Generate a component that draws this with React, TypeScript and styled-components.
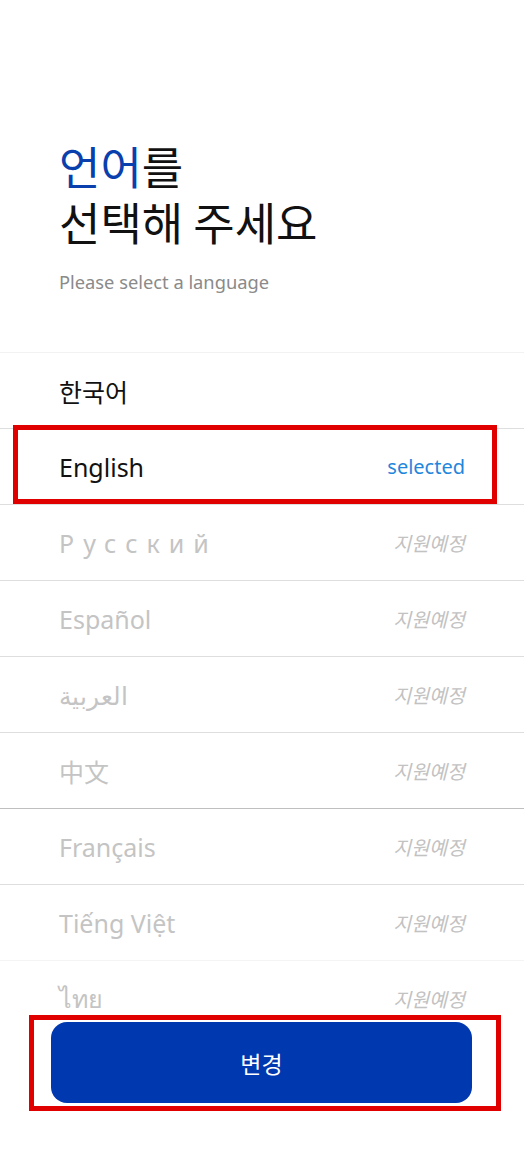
import React from "react";
import styled, { createGlobalStyle } from "styled-components";

const GlobalStyle = createGlobalStyle`
  html, body {
    margin: 0;
    padding: 0;
    background: #ffffff;
  }
  body {
    font-family: "Noto Sans", "Noto Sans CJK KR", sans-serif;
  }
  * {
    box-sizing: border-box;
  }
`;

type Divider = "faint" | "normal" | "strong" | "none";

const dividerColors: Record<Divider, string> = {
  faint: "#f4f4f4",
  normal: "#dedede",
  strong: "#bfbfbf",
  none: "transparent",
};

// Whole screen
const Screen = styled.div`
  position: relative;
  display: flex;
  flex-direction: column;
  width: 100%;
  height: 100vh;
  overflow: hidden;
  background: #ffffff;
`;

const Header = styled.header`
  display: flex;
  flex-direction: column;
  height: 352px;
  padding: 138px 0 0 59px;
`;

const Title = styled.h1`
  margin: 0;
  font-family: "Noto Sans CJK KR", sans-serif;
  font-size: 45px;
  font-weight: 400;
  line-height: 56px;
  color: #111111;
`;

const Accent = styled.span`
  color: #0a3fae;
`;

const Subtitle = styled.p`
  margin: 19px 0 0;
  font-size: 18.3px;
  line-height: 26px;
  color: #8a8a8a;
`;

const List = styled.ul`
  flex: 1;
  min-height: 0;
  margin: 0;
  padding: 0;
  list-style: none;
  overflow: hidden;
  border-top: 1px solid #f2f2f2;
`;

const Row = styled.li<{ $divider: Divider }>`
  display: flex;
  align-items: center;
  justify-content: space-between;
  height: 76px;
  padding: 0 59px 0 59px;
  border-bottom: 1px solid ${(p) => dividerColors[p.$divider]};
`;

const LangName = styled.span<{ $muted?: boolean; $spaced?: boolean }>`
  font-family: "Noto Sans", "Noto Sans CJK KR", "Noto Sans CJK SC", sans-serif;
  font-size: 25px;
  color: ${(p) => (p.$muted ? "#c4c4c4" : "#111111")};
  letter-spacing: ${(p) => (p.$spaced ? "0.36em" : "0")};
`;

const Selected = styled.span`
  font-size: 20px;
  color: #1f86dc;
`;

const Pending = styled.span`
  font-family: "Noto Sans CJK KR", sans-serif;
  font-size: 19.5px;
  font-style: italic;
  color: #c2c2c2;
`;

const Footer = styled.footer`
  display: flex;
  padding: 7px 52px 48px 51px;
`;

const ChangeButton = styled.button`
  flex: 1;
  height: 81px;
  border: none;
  border-radius: 16px;
  background: #0038b0;
  color: #ffffff;
  font-family: "Noto Sans CJK KR", sans-serif;
  font-size: 23px;
  font-weight: 400;
  cursor: pointer;
`;

// Red annotation frames drawn over the screenshot
const Highlight = styled.div<{ $top: number; $left: number; $w: number; $h: number }>`
  position: absolute;
  top: ${(p) => p.$top}px;
  left: ${(p) => p.$left}px;
  width: ${(p) => p.$w}px;
  height: ${(p) => p.$h}px;
  border: 5px solid #e00000;
  pointer-events: none;
`;

const languages: { name: string; status: "none" | "selected" | "pending"; spaced?: boolean; divider: Divider }[] = [
  { name: "한국어", status: "none", divider: "normal" },
  { name: "English", status: "selected", divider: "normal" },
  { name: "Русский", status: "pending", spaced: true, divider: "normal" },
  { name: "Español", status: "pending", divider: "normal" },
  { name: "العربية", status: "pending", divider: "normal" },
  { name: "中文", status: "pending", divider: "strong" },
  { name: "Français", status: "pending", divider: "normal" },
  { name: "Tiếng Việt", status: "pending", divider: "faint" },
  { name: "ไทย", status: "pending", divider: "none" },
];

const App: React.FC = () => (
  <>
    <GlobalStyle />
    <Screen>
      <Header>
        <Title>
          <Accent>언어</Accent>를
          <br />
          선택해 주세요
        </Title>
        <Subtitle>Please select a language</Subtitle>
      </Header>
      <List>
        {languages.map((lang) => (
          <Row key={lang.name} $divider={lang.divider}>
            <LangName $muted={lang.status === "pending"} $spaced={lang.spaced}>
              {lang.name}
            </LangName>
            {lang.status === "selected" && <Selected>selected</Selected>}
            {lang.status === "pending" && <Pending>지원예정</Pending>}
          </Row>
        ))}
      </List>
      <Footer>
        <ChangeButton>변경</ChangeButton>
      </Footer>
      <Highlight $top={425} $left={13} $w={484} $h={79} />
      <Highlight $top={1015} $left={29} $w={472} $h={96} />
    </Screen>
  </>
);

export default App;
